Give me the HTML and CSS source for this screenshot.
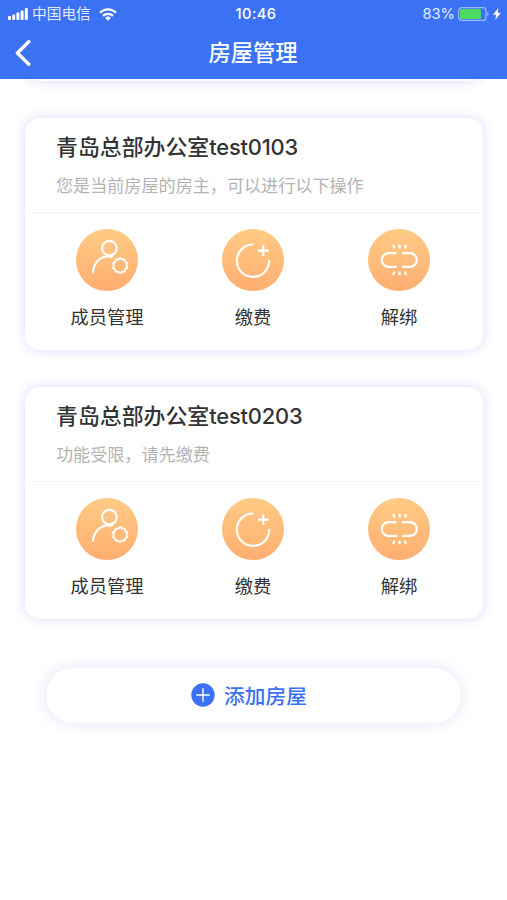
FILE: index.html
```html
<!DOCTYPE html>
<html lang="zh-CN">
<head>
    <meta charset="UTF-8">
    <meta name="viewport" content="width=device-width, initial-scale=1.0">
    <title>房屋管理</title>
    <link rel="stylesheet" href="styles.css">
</head>
<body>
    <!-- Icon definitions -->
    <svg class="icon-defs" width="0" height="0">
        <symbol id="icon-member" viewBox="0 0 62 62">
            <circle cx="33.4" cy="19.2" r="7.3"/>
            <path d="M17 43.7C17.4 34.7 22.7 28.2 31.2 27.5c2.2-.1 4 .1 5.6.8"/>
            <path transform="translate(44.2 36.6) scale(.86)" d="M0-8.7l2.3 1.6 2.8.1.9 2.6 2.2 1.7-.8 2.7.8 2.7-2.2 1.7-.9 2.6-2.8.1-2.3 1.6-2.3-1.6-2.8-.1-.9-2.6-2.2-1.7.8-2.7-.8-2.7 2.2-1.7.9-2.6 2.8-.1z"/>
        </symbol>
        <symbol id="icon-pay" viewBox="0 0 62 62">
            <path d="M31.3 15.5A16.2 16.2 0 1 0 47.2 31"/>
            <path d="M35.9 21.7h10.8M41.3 16.3v10.8"/>
        </symbol>
        <symbol id="icon-unbind" viewBox="0 0 62 62">
            <path d="M28.4 24.1H20.7a6.9 6.9 0 0 0 0 13.8h8.4M34 24.1h7.9a6.9 6.9 0 0 1 0 13.8h-8"/>
            <path d="M25.2 15.8l1.2 3.7M31.6 15.8v3.7M38 15.8l-1.2 3.7M25.2 46.2l1.2-3.7M31.6 46.2v-3.7M38 46.2l-1.2-3.7"/>
        </symbol>
    </svg>

    <!-- Header -->
    <header class="header">
        <div class="status-bar">
            <div class="status-left">
                <svg class="signal" width="21" height="12" viewBox="0 0 21 12">
                    <rect x="0" y="8" width="3" height="4" rx="1"/>
                    <rect x="4.2" y="6.5" width="3" height="5.5" rx="1"/>
                    <rect x="8.4" y="4.5" width="3" height="7.5" rx="1"/>
                    <rect x="12.6" y="2.5" width="3" height="9.5" rx="1"/>
                    <rect x="16.8" y="0" width="3" height="12" rx="1"/>
                </svg>
                <span class="carrier">中国电信</span>
                <svg class="wifi" width="18" height="13" viewBox="0 0 18 13">
                    <path d="M1 4.7a11.4 11.4 0 0 1 16 0M4 7.9a7.1 7.1 0 0 1 10 0"/>
                    <path class="wifi-dot" d="M6.1 9.9a4.1 4.1 0 0 1 5.8 0L9 12.8z"/>
                </svg>
            </div>
            <span class="time">10:46</span>
            <div class="status-right">
                <span class="percent">83%</span>
                <svg class="battery" width="32" height="14" viewBox="0 0 32 14">
                    <rect class="battery-case" x=".6" y=".6" width="27.3" height="12.8" rx="3"/>
                    <rect class="battery-level" x="2" y="2" width="21" height="10" rx="1.5"/>
                    <path class="battery-cap" d="M29.3 5c1.7.3 1.7 3.7 0 4z"/>
                </svg>
                <svg class="bolt" width="8" height="12" viewBox="0 0 8 12">
                    <path d="M5.4 0L0 6.8h3.2L2.2 12 8 4.8H4.6z"/>
                </svg>
            </div>
        </div>
        <div class="nav-bar">
            <svg class="back" width="17" height="28" viewBox="0 0 17 28">
                <path d="M14.8 2.7L3.4 14l11.4 11.3"/>
            </svg>
            <h1 class="nav-title">房屋管理</h1>
        </div>
    </header>

    <main class="content">
        <!-- Scrolled under the header -->
        <section class="card card-passed"></section>

        <section class="card">
            <div class="card-header">
                <h2 class="card-title">青岛总部办公室<span class="room">test0103</span></h2>
                <p class="card-tip">您是当前房屋的房主，可以进行以下操作</p>
            </div>
            <div class="actions">
                <div class="action">
                    <svg class="action-icon"><use href="#icon-member"/></svg>
                    <span class="action-label">成员管理</span>
                </div>
                <div class="action">
                    <svg class="action-icon"><use href="#icon-pay"/></svg>
                    <span class="action-label">缴费</span>
                </div>
                <div class="action">
                    <svg class="action-icon"><use href="#icon-unbind"/></svg>
                    <span class="action-label">解绑</span>
                </div>
            </div>
        </section>

        <section class="card">
            <div class="card-header">
                <h2 class="card-title">青岛总部办公室<span class="room">test0203</span></h2>
                <p class="card-tip">功能受限，请先缴费</p>
            </div>
            <div class="actions">
                <div class="action">
                    <svg class="action-icon"><use href="#icon-member"/></svg>
                    <span class="action-label">成员管理</span>
                </div>
                <div class="action">
                    <svg class="action-icon"><use href="#icon-pay"/></svg>
                    <span class="action-label">缴费</span>
                </div>
                <div class="action">
                    <svg class="action-icon"><use href="#icon-unbind"/></svg>
                    <span class="action-label">解绑</span>
                </div>
            </div>
        </section>

        <button class="add-button">
            <svg class="add-icon" width="24" height="24" viewBox="0 0 24 24">
                <circle cx="12" cy="12" r="11.7"/>
                <path d="M5.3 12h13.4M12 5.3v13.4"/>
            </svg>
            <span>添加房屋</span>
        </button>
    </main>
</body>
</html>
```

FILE: styles.css
```css
* {
    box-sizing: border-box;
    margin: 0;
    padding: 0;
}

body {
    height: 900px;
    overflow: hidden;
    display: flex;
    flex-direction: column;
    background-color: #fff;
    font-family: Inter, 'Noto Sans CJK SC', sans-serif;
    color: #333;
}

.icon-defs {
    display: none;
}

/* Header */
.header {
    flex: none;
    height: 79px;
    background-color: #3b72f4;
    color: #fff;
}

.status-bar {
    display: grid;
    grid-template-columns: 1fr auto 1fr;
    align-items: center;
    height: 27px;
    padding: 0 6px 0 8px;
    font-size: 14.7px;
    line-height: 28px;
}

.status-left,
.status-right {
    display: flex;
    align-items: center;
    height: 27px;
}

.status-right {
    justify-content: flex-end;
}

.signal,
.bolt {
    fill: #fff;
}

.carrier {
    margin: 0 8px 0 3px;
    color: #e3ebff;
}

.wifi {
    fill: none;
    stroke: #fff;
    stroke-width: 2.2;
}

.wifi-dot {
    fill: #fff;
    stroke: none;
}

.time {
    padding-left: 3px;
    font-weight: 500;
    letter-spacing: 0.4px;
}

.percent {
    margin-right: 3px;
    color: #e3ebff;
}

.battery-case {
    fill: none;
    stroke: #9db9fb;
    stroke-width: 1.2;
}

.battery-level {
    fill: #4cd964;
}

.battery-cap {
    fill: #9db9fb;
}

.bolt {
    margin-left: 3px;
}

.nav-bar {
    display: grid;
    grid-template-columns: 1fr auto 1fr;
    align-items: center;
    height: 51px;
    padding: 0 15px 0 14px;
}

.back {
    fill: none;
    stroke: #fff;
    stroke-width: 3.4;
    stroke-linecap: round;
    stroke-linejoin: round;
}

.nav-title {
    font-size: 22.3px;
    font-weight: 500;
    line-height: 51px;
}

/* House cards */
.content {
    flex: 1;
    overflow: hidden;
    padding: 0 24px 0 25px;
}

.card {
    height: 232px;
    margin-bottom: 37px;
    border-radius: 15px;
    background-color: #fff;
    box-shadow: 0 0 12px rgba(90, 80, 245, 0.22);
}

.card-passed {
    margin-top: -230px;
}

.card-header {
    height: 95px;
    margin: 0 3px;
    padding: 13px 28px 0;
    border-bottom: 1px solid #f4f4f4;
}

.card-title {
    font-size: 21.9px;
    font-weight: 500;
    line-height: 32px;
}

.room {
    letter-spacing: -0.2px;
}

.card-tip {
    margin-top: 10px;
    font-size: 17.1px;
    line-height: 26px;
    color: #b3b3b3;
}

.actions {
    display: grid;
    grid-template-columns: repeat(3, 1fr);
    padding: 16px 11px 0 9px;
}

.action {
    display: flex;
    flex-direction: column;
    align-items: center;
}

.action-icon {
    width: 62px;
    height: 62px;
    border-radius: 50%;
    background: linear-gradient(#ffcb85, #ffae70);
    fill: none;
    stroke: #fff;
    stroke-width: 2.2;
    stroke-linejoin: round;
}

.action-label {
    margin-top: 12px;
    font-size: 18.3px;
    line-height: 28px;
}

/* Add button */
.add-button {
    display: flex;
    justify-content: center;
    align-items: center;
    width: 415px;
    height: 55px;
    margin: 49px 0 0 21px;
    padding: 0 9px 1px 0;
    border: none;
    border-radius: 28px;
    background-color: #fff;
    box-shadow: 0 0 15px rgba(90, 80, 220, 0.16);
    color: #3b72f4;
    font-family: inherit;
    font-size: 20.7px;
    font-weight: 500;
}

.add-icon {
    margin-right: 9px;
    fill: #3b72f4;
    stroke: #fff;
    stroke-width: 1.4;
}

.add-icon circle {
    stroke: none;
}
```
